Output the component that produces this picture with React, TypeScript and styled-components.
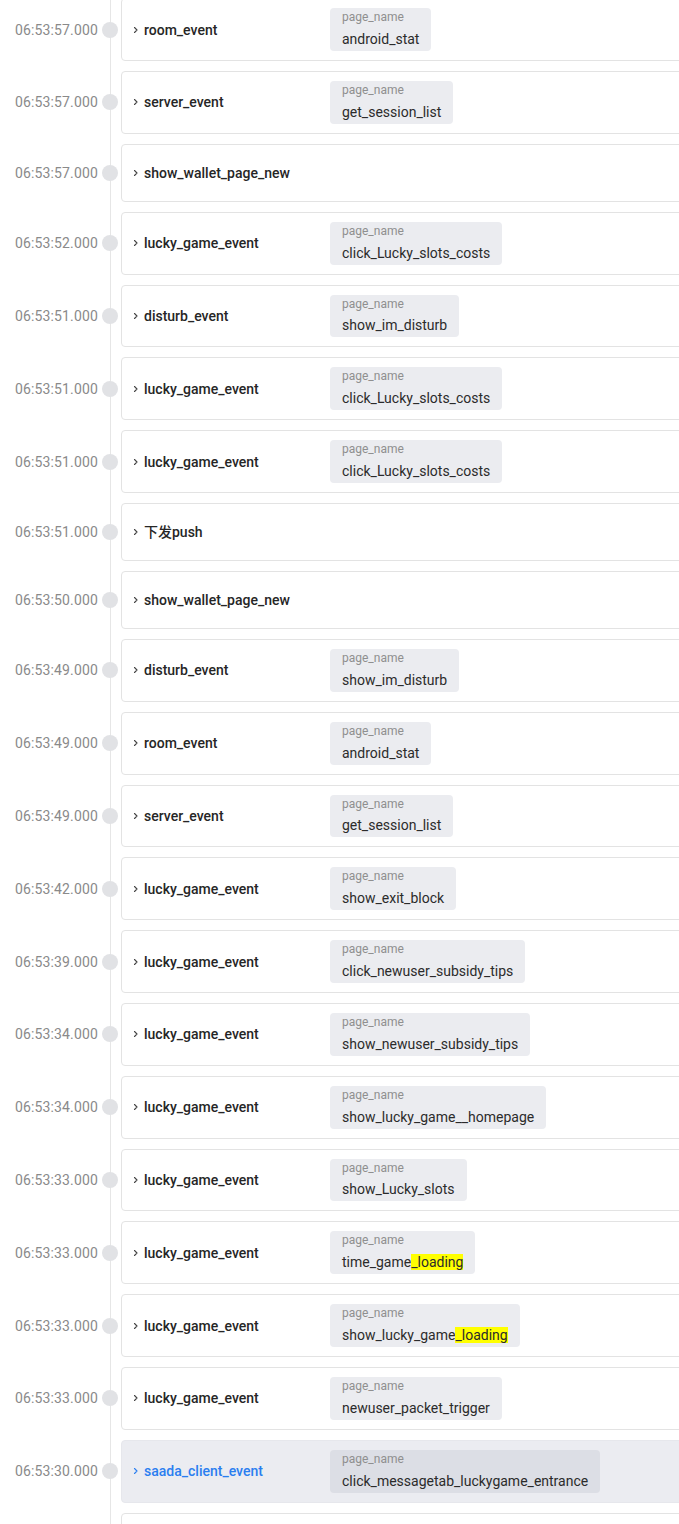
import React from "react";
import styled, { createGlobalStyle } from "styled-components";

const GlobalStyle = createGlobalStyle`
  html, body {
    margin: 0;
    padding: 0;
    background: #ffffff;
    overflow: hidden;
    font-family: Roboto, "Noto Sans CJK SC", "Liberation Sans", sans-serif;
  }
`;

const Timeline = styled.div`
  width: 740px;
  margin-top: -1.8px;
  display: flex;
  flex-direction: column;
  gap: 10px;
  background: linear-gradient(#e6e6e6, #e6e6e6) no-repeat 110px 0 / 1px 100%;
`;

const Row = styled.div`
  display: flex;
  align-items: center;
`;

const Time = styled.div`
  width: 98px;
  text-align: right;
  font-size: 14px;
  line-height: 20px;
  letter-spacing: 0.15px;
  color: #8a8a8a;
  flex-shrink: 0;
`;

const Dot = styled.div`
  width: 16px;
  height: 16px;
  border-radius: 50%;
  background: #e1e2e5;
  margin: 0 3px 0 4px;
  flex-shrink: 0;
`;

const Card = styled.div<{ $active?: boolean }>`
  flex: 1;
  box-sizing: border-box;
  min-height: 58px;
  padding: 9px 0 9px 8px;
  display: flex;
  align-items: center;
  border: 1px solid ${(p) => (p.$active ? "#e6e7ec" : "#e3e3e3")};
  border-radius: 4px;
  background: ${(p) => (p.$active ? "#ebecf1" : "#ffffff")};
`;

const Head = styled.div<{ $active?: boolean }>`
  width: 200px;
  height: 20px;
  flex-shrink: 0;
  display: flex;
  align-items: center;
  gap: 2px;
  font-size: 14px;
  line-height: 20px;
  font-weight: 500;
  color: ${(p) => (p.$active ? "#2a7ef0" : "#262626")};
`;

const Chevron = styled.svg`
  width: 12px;
  height: 12px;
  flex-shrink: 0;
`;

const Tag = styled.div<{ $active?: boolean }>`
  padding: 1px 12px 0 12px;
  border-radius: 4px;
  background: ${(p) => (p.$active ? "#dcdee5" : "#ebecf0")};
  display: flex;
  flex-direction: column;
`;

const TagLabel = styled.span`
  font-size: 12px;
  line-height: 17.8px;
  color: #8f8f8f;
`;

const TagValue = styled.span`
  font-size: 14px;
  line-height: 24px;
  color: #2b2b2b;
  white-space: nowrap;
`;

const Mark = styled.mark`
  background: #ffff00;
  color: inherit;
`;

type Item = { time: string; name: string; page?: string; hl?: string; active?: boolean };

const items: Item[] = [
  { time: "06:53:57.000", name: "room_event", page: "android_stat" },
  { time: "06:53:57.000", name: "server_event", page: "get_session_list" },
  { time: "06:53:57.000", name: "show_wallet_page_new" },
  { time: "06:53:52.000", name: "lucky_game_event", page: "click_Lucky_slots_costs" },
  { time: "06:53:51.000", name: "disturb_event", page: "show_im_disturb" },
  { time: "06:53:51.000", name: "lucky_game_event", page: "click_Lucky_slots_costs" },
  { time: "06:53:51.000", name: "lucky_game_event", page: "click_Lucky_slots_costs" },
  { time: "06:53:51.000", name: "下发push" },
  { time: "06:53:50.000", name: "show_wallet_page_new" },
  { time: "06:53:49.000", name: "disturb_event", page: "show_im_disturb" },
  { time: "06:53:49.000", name: "room_event", page: "android_stat" },
  { time: "06:53:49.000", name: "server_event", page: "get_session_list" },
  { time: "06:53:42.000", name: "lucky_game_event", page: "show_exit_block" },
  { time: "06:53:39.000", name: "lucky_game_event", page: "click_newuser_subsidy_tips" },
  { time: "06:53:34.000", name: "lucky_game_event", page: "show_newuser_subsidy_tips" },
  { time: "06:53:34.000", name: "lucky_game_event", page: "show_lucky_game__homepage" },
  { time: "06:53:33.000", name: "lucky_game_event", page: "show_Lucky_slots" },
  { time: "06:53:33.000", name: "lucky_game_event", page: "time_game", hl: "_loading" },
  { time: "06:53:33.000", name: "lucky_game_event", page: "show_lucky_game", hl: "_loading" },
  { time: "06:53:33.000", name: "lucky_game_event", page: "newuser_packet_trigger" },
  { time: "06:53:30.000", name: "saada_client_event", page: "click_messagetab_luckygame_entrance", active: true },
  { time: "06:53:30.000", name: "show_wallet_page_new" },
];

export default function App() {
  return (
    <>
      <GlobalStyle />
      <Timeline>
        {items.map((it, i) => (
          <Row key={i}>
            <Time>{it.time}</Time>
            <Dot />
            <Card $active={it.active}>
              <Head $active={it.active}>
                <Chevron viewBox="0 0 12 12">
                  <path
                    d="M4.5 3.5 L7 6 L4.5 8.5"
                    fill="none"
                    stroke={it.active ? "#2a7ef0" : "#444"}
                    strokeWidth="1.1"
                    strokeLinecap="round"
                    strokeLinejoin="round"
                  />
                </Chevron>
                <span>{it.name}</span>
              </Head>
              {it.page && (
                <Tag $active={it.active}>
                  <TagLabel>page_name</TagLabel>
                  <TagValue>
                    {it.page}
                    {it.hl && <Mark>{it.hl}</Mark>}
                  </TagValue>
                </Tag>
              )}
            </Card>
          </Row>
        ))}
      </Timeline>
    </>
  );
}
